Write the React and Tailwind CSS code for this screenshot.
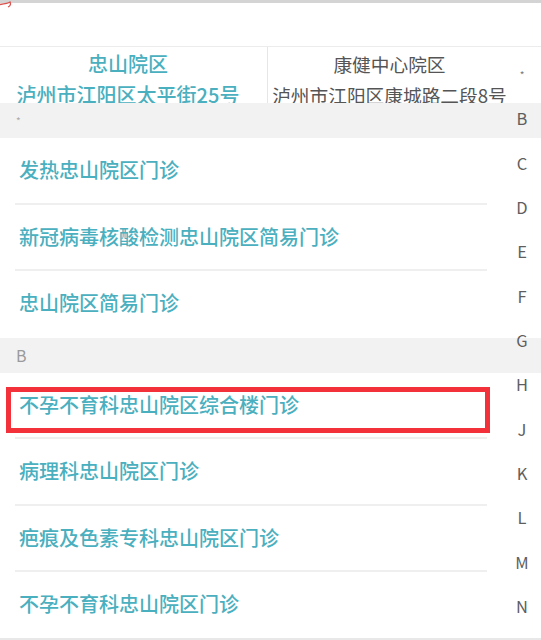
import React from "react";

const font = { fontFamily: '"Noto Sans CJK SC", "Noto Sans", sans-serif' };

const sections = [
  {
    title: "*",
    items: ["发热忠山院区门诊", "新冠病毒核酸检测忠山院区简易门诊", "忠山院区简易门诊"],
  },
  {
    title: "B",
    items: ["不孕不育科忠山院区综合楼门诊", "病理科忠山院区门诊", "疤痕及色素专科忠山院区门诊", "不孕不育科忠山院区门诊"],
  },
];

const letters = ["*", "B", "C", "D", "E", "F", "G", "H", "J", "K", "L", "M", "N"];

export default function App() {
  return (
    <div className="relative w-[541px] h-[640px] overflow-hidden bg-white font-['Noto_Sans_CJK_SC',sans-serif]">
      {/* top strip */}
      <div className="relative h-[3px] bg-[#d4d4d4]">
        <svg className="absolute left-0 top-0" width="14" height="9" viewBox="0 0 14 9">
          <path d="M0 4.5 C4 4 8 3.5 10 2 C11 4 10.5 6 8 7" fill="none" stroke="#d9534f" strokeWidth="1.3" />
        </svg>
      </div>
      <div className="h-[43px]" />

      {/* hospital tabs */}
      <div className="flex h-[57px] overflow-hidden border-t border-[#ececec]">
        <div className="w-[268px] shrink-0 border-r border-[#e6e6e6] pr-[11px] pt-[1px] text-center text-[20px] leading-[31px] font-medium text-[#4aafbe]">
          <div>忠山院区</div>
          <div className="whitespace-nowrap">泸州市江阳区太平街25号</div>
        </div>
        <div className="flex-1 pr-[30px] pt-[1px] text-center text-[18.7px] leading-[31px] text-[#555]">
          <div>康健中心院区</div>
          <div className="whitespace-nowrap">泸州市江阳区康城路二段8号</div>
        </div>
      </div>

      {/* list */}
      <div>
        {sections.map((s) => (
          <div key={s.title}>
            <div className="flex h-[35px] items-center bg-[#f2f2f2] pl-[16px] text-[16px] text-[#9a9a9a]">
              <span className={s.title === "*" ? "text-[10px] text-[#aaa]" : ""}>{s.title}</span>
            </div>
            {s.items.map((it, i) => (
              <div key={it} className="relative">
                <div className="flex h-[64.5px] items-center pl-[19px] text-[20px] font-medium text-[#4aafbe]">{it}</div>
                <div className={i < s.items.length - 1 ? "ml-[15px] mr-[54px] h-[2px] bg-[#efefef]" : "h-[2px]"} />
                {s.title === "B" && i === 0 && (
                  <div className="absolute left-[6px] top-[14px] h-[46px] w-[484px] border-[5px] border-[#f2313a]" />
                )}
              </div>
            ))}
          </div>
        ))}
      </div>

      {/* bottom line */}
      <div className="absolute bottom-0 left-0 h-[2px] w-full bg-[#e8e8e8]" />

      {/* index bar */}
      <div className="absolute right-0 top-[52px] w-[38px] text-[16.5px] text-[#5e5e5e]" style={font}>
        {letters.map((l) => (
          <div key={l} className="flex h-[44.36px] items-center justify-center">
            <span className={l === "*" ? "text-[10px] text-[#777]" : ""}>{l}</span>
          </div>
        ))}
      </div>
    </div>
  );
}
